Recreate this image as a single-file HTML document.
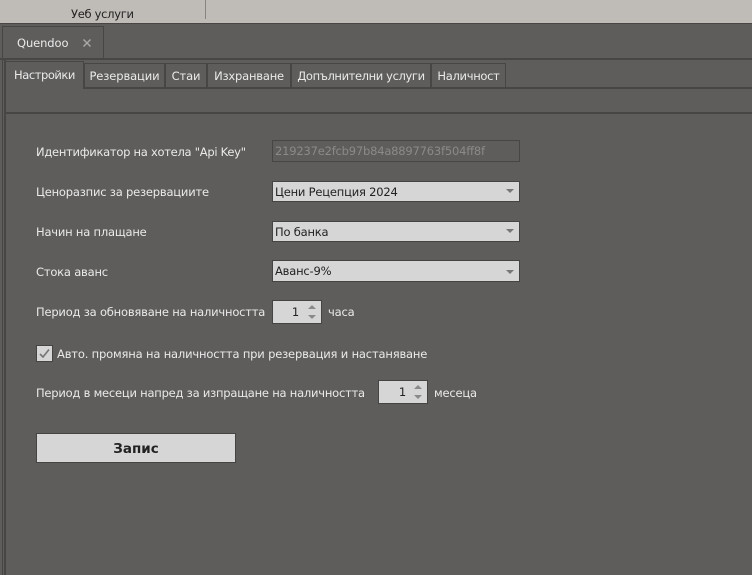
<!DOCTYPE html>
<html><head><meta charset="utf-8"><style>
html,body{margin:0;padding:0;width:752px;height:575px;overflow:hidden;background:#5e5d5c}
body{position:relative;font:12px "DejaVu Sans","Liberation Sans",sans-serif;color:#eaeaea}
div{position:absolute;box-sizing:border-box;white-space:nowrap}
.t{line-height:16px;height:16px}
.tab{top:63px;height:26px;border:1px solid #474644;border-bottom:0;line-height:24px;text-align:center;font-size:11.5px;letter-spacing:-.2px}
.hl{left:0;width:752px;background:#474644}
.in{background:#d6d6d6;border:1px solid #454442;color:#222;height:21px;line-height:21px;padding-left:2px;font-size:11.5px;letter-spacing:-.2px}
.arr{width:0;height:0;border-left:4px solid transparent;border-right:4px solid transparent;border-top:4px solid #777}
.up{width:0;height:0;border-left:4px solid transparent;border-right:4px solid transparent;border-bottom:4px solid #8a8a8a}
.dn{width:0;height:0;border-left:4px solid transparent;border-right:4px solid transparent;border-top:4px solid #8a8a8a}
.l{font-size:11.5px;letter-spacing:-.2px}
</style></head><body>
<div style="left:0;top:0;width:752px;height:23px;background:#bfbbb7"></div>
<div class="hl" style="top:23px;height:1px"></div>
<div style="left:205px;top:0;width:1px;height:19px;background:#85827f"></div>
<div class="t" style="left:71px;top:6px;color:#222;font-size:11.5px;letter-spacing:-.3px">Уеб услуги</div>

<div style="left:2px;top:26px;width:102px;height:33px;border:1px solid #474644;border-bottom:0"></div>
<div class="t" style="left:17px;top:35px;font-size:11.5px;letter-spacing:-.1px">Quendoo</div>
<svg style="position:absolute;left:82px;top:38px" width="10" height="10"><path d="M1.5 1.5L8.5 8.5M8.5 1.5L1.5 8.5" stroke="#a9a9a7" stroke-width="1.4"/></svg>
<div class="hl" style="top:58px;height:2px"></div>
<div style="left:2px;top:58px;width:1px;height:517px;background:#474644"></div>
<div style="left:4px;top:60px;width:2px;height:515px;background:#474644"></div>

<div class="tab" style="left:5px;top:61px;width:79px;height:28px;line-height:26px;background:#5e5d5c;z-index:2;letter-spacing:-.45px">Настройки</div>
<div class="tab" style="left:84px;width:81px;letter-spacing:-.1px">Резервации</div>
<div class="tab" style="left:165px;width:42px;letter-spacing:-.1px">Стаи</div>
<div class="tab" style="left:207px;width:84px">Изхранване</div>
<div class="tab" style="left:291px;width:140px;letter-spacing:-.38px">Допълнителни услуги</div>
<div class="tab" style="left:431px;width:75px;letter-spacing:-.3px">Наличност</div>
<div class="hl" style="top:87px;height:2px;left:6px;width:746px"></div>
<div class="hl" style="top:112px;height:2px;left:6px;width:746px"></div>

<div class="t l" style="left:36px;top:144px;letter-spacing:-.27px">Идентификатор на хотела "Api Key"</div>
<div style="left:272px;top:140px;width:248px;height:22px;border:1px solid #474644;color:#8b8a87;line-height:21px;padding-left:2px;font-size:11.5px;letter-spacing:-.2px">219237e2fcb97b84a8897763f504ff8f</div>

<div class="t l" style="left:36px;top:184px">Ценоразпис за резервациите</div>
<div class="in" style="left:272px;top:181px;width:248px">Цени Рецепция 2024</div>
<div class="arr" style="left:506px;top:189px"></div>

<div class="t l" style="left:36px;top:224px">Начин на плащане</div>
<div class="in" style="left:272px;top:221px;width:248px">По банка</div>
<div class="arr" style="left:506px;top:229px"></div>

<div class="t l" style="left:36px;top:264px">Стока аванс</div>
<div class="in" style="left:272px;top:260px;width:248px;height:22px;line-height:21px">Аванс-9%</div>
<div class="arr" style="left:506px;top:270px"></div>

<div class="t l" style="left:36px;top:304px">Период за обновяване на наличността</div>
<div class="in" style="left:272px;top:300px;width:50px;height:24px;line-height:23px;padding:0 22px 0 0;text-align:right">1</div>
<div class="up" style="left:308px;top:305px"></div>
<div class="dn" style="left:308px;top:315px"></div>
<div class="t l" style="left:328px;top:304px">часа</div>

<div style="left:36px;top:345px;width:17px;height:17px;background:#d6d6d6;border:1px solid #454442"></div>
<svg style="position:absolute;left:36px;top:345px" width="17" height="17"><path d="M4 9L7 12L13 4.5" fill="none" stroke="#777" stroke-width="1.7"/></svg>
<div class="t l" style="left:57px;top:346px;letter-spacing:-.17px">Авто. промяна на наличността при резервация и настаняване</div>

<div class="t l" style="left:36px;top:385px;letter-spacing:-.22px">Период в месеци напред за изпращане на наличността</div>
<div class="in" style="left:378px;top:380px;width:50px;height:24px;line-height:23px;padding:0 21px 0 0;text-align:right">1</div>
<div class="up" style="left:414px;top:385px"></div>
<div class="dn" style="left:414px;top:395px"></div>
<div class="t l" style="left:434px;top:385px">месеца</div>

<div style="left:36px;top:433px;width:200px;height:30px;background:#d6d6d6;border:1px solid #454442;color:#222;font-weight:bold;font-size:13.5px;line-height:30px;text-align:center">Запис</div>
</body></html>
